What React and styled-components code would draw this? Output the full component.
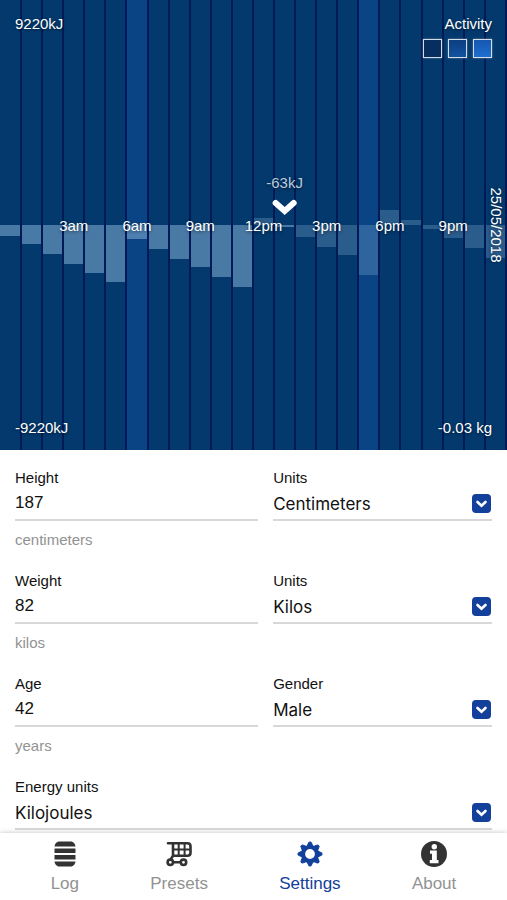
import { useState } from "react";
import styled, { createGlobalStyle } from "styled-components";

// one entry per hour, in px from the axis; negative hangs below it
const hours = [
  -11, -19, -29, -39, -48, -57, -14, -24, -34, -42, -52, -62, 7, -2, -12, -22,
  -30, -50, 15, 5, -4, -13, -23, -33,
];
const currentHour = 13;
const activeHours = [6, 17];
const hourLabels = {
  3: "3am",
  6: "6am",
  9: "9am",
  12: "12pm",
  15: "3pm",
  18: "6pm",
  21: "9pm",
};

const GlobalStyle = createGlobalStyle`
  * {
    box-sizing: border-box;
  }
  body {
    margin: 0;
    background: #fff;
    font-family: "Liberation Sans", Arial, sans-serif;
    font-size: 15px;
    line-height: 18px;
    color: #111;
  }
`;

const Page = styled.div`
  display: flex;
  flex-direction: column;
  height: 100vh;
`;

const Chart = styled.section`
  position: relative;
  flex: 0 0 50%;
  display: flex;
  padding-left: 1px;
  background: #03396c;
  color: #fff;
  text-shadow: 0 1px 3px rgba(0, 0, 0, 0.5);
  overflow: hidden;
`;

const Column = styled.div`
  position: relative;
  flex: 1;
  border-right: 2px solid #001a57;
  background: ${(props) => (props.$active ? "#0a4484" : "transparent")};
`;

const Bar = styled.div`
  position: absolute;
  left: 0;
  right: 0;
  ${(props) => (props.$up ? "bottom: 50%;" : "top: 50%;")}
  background: ${(props) =>
    props.$past ? "rgba(160, 200, 235, 0.45)" : "rgba(160, 200, 235, 0.25)"};

  ${Column}:first-child > & {
    left: -1px;
  }
`;

const HourLabel = styled.span`
  position: absolute;
  z-index: 1;
  top: 50%;
  left: 50%;
  transform: translate(-50%, -50%);
  padding-top: 2px;
  white-space: nowrap;
`;

const Marker = styled.div`
  position: absolute;
  z-index: 1;
  bottom: calc(50% + 8px);
  left: 50%;
  transform: translateX(-50%);
  display: flex;
  flex-direction: column;
  align-items: center;
  gap: 6px;
  color: #b9cbdd;
  white-space: nowrap;
`;

const Corner = styled.div`
  position: absolute;
  z-index: 1;
  ${(props) => (props.$bottom ? "bottom: 13px;" : "top: 15px;")}
  ${(props) => (props.$right ? "right: 15px;" : "left: 15px;")}
`;

const Legend = styled.div`
  display: flex;
  flex-direction: column;
  align-items: flex-end;
  gap: 6px;
`;

const Swatches = styled.div`
  display: flex;
  gap: 6px;
`;

const Swatch = styled.button`
  width: 19px;
  height: 19px;
  padding: 0;
  border: 1px solid #d3dde8;
  box-shadow: 0 0 2px rgba(255, 255, 255, 0.4);
  background: ${(props) => props.$fill};
  cursor: pointer;
`;

const DateLabel = styled.div`
  position: absolute;
  z-index: 1;
  top: 50%;
  right: 2px;
  transform: translateY(-50%);
  writing-mode: vertical-rl;
`;

const Form = styled.form`
  flex: 1;
  min-height: 0;
  overflow-y: auto;
  scrollbar-width: none;
  padding: 19px 15px 0;
  display: flex;
  flex-direction: column;
  gap: 23px;
`;

const Row = styled.div`
  display: grid;
  grid-template-columns: ${(props) => (props.$full ? "1fr" : "10fr 9fr")};
  column-gap: 15px;
`;

const Field = styled.div`
  display: flex;
  flex-direction: column;
  min-width: 0;
`;

const Control = styled.div`
  display: grid;
  align-items: center;
  height: 34px;
  border-bottom: 2px solid #d8d8d8;

  & > * {
    grid-area: 1 / 1;
  }
`;

const controlText = `
  width: 100%;
  height: 32px;
  margin: 0;
  padding: 0;
  border: 0;
  outline: 0;
  background: none;
  color: #111;
  font-size: 17px;
`;

const Input = styled.input`
  ${controlText}
  font-family: "Liberation Sans", Arial, sans-serif;
`;

const Select = styled.select`
  ${controlText}
  appearance: none;
  padding-top: 2px;
  font-family: Inter, "Liberation Sans", sans-serif;
  cursor: pointer;
`;

const SelectArrow = styled.svg`
  justify-self: end;
  margin-right: 1px;
  pointer-events: none;
`;

const Hint = styled.small`
  padding-top: 10px;
  font-size: 15px;
  color: #929292;
`;

const Tabs = styled.nav`
  z-index: 2;
  flex: none;
  display: flex;
  justify-content: space-around;
  padding: 8px 15px 5px;
  background: #fff;
  box-shadow: 0 0 5px rgba(0, 0, 0, 0.25);
`;

const Tab = styled.a`
  display: flex;
  flex-direction: column;
  align-items: center;
  gap: 6px;
  font-size: 17px;
  line-height: 22px;
  text-decoration: none;
  color: ${(props) => (props.$active ? "#12409a" : "#929292")};

  svg {
    color: ${(props) => (props.$active ? "#12409a" : "#333")};
  }
`;

const LogIcon = () => (
  <svg width="26" height="26" viewBox="0 0 26 26" fill="currentColor">
    <path d="M6.500 0.500h13q3.500 1 4 5H2.500q.5-4 4-5z" />
    <rect x="2.500" y="7.500" width="21" height="4.500" rx="0.500" />
    <rect x="2.500" y="14" width="21" height="4.500" rx="0.500" />
    <path d="M2.500 20.500h21q-.5 4-4 5h-13q-3.500-1-4-5z" />
  </svg>
);

const CartIcon = () => (
  <svg
    width="26"
    height="26"
    viewBox="0 0 26 26"
    fill="none"
    stroke="currentColor"
    strokeWidth="2.600"
    strokeLinecap="round"
    strokeLinejoin="round"
  >
    <path d="M2 2.200h19.500q3 0 3 3v6.500q0 3-3 3H7.500M7 2.500v12.200l-2.500 4" />
    <path d="M12.700 3v11.500M18.600 3v11.500M8 8.600h16" strokeWidth="2" />
    <circle cx="4.300" cy="21.300" r="2.700" />
    <circle cx="17.500" cy="21.300" r="2.700" />
    <path d="M7.500 21.300h7" />
  </svg>
);

const GearIcon = () => (
  <svg width="26" height="26" viewBox="0 0 26 26" stroke="currentColor">
    <circle cx="13" cy="13" r="7" fill="none" strokeWidth="4.200" />
    {[0, 45, 90, 135, 180, 225, 270, 315].map((angle) => (
      <path
        key={angle}
        d="M10.200 5l1.600-3.700q1.200-.8 2.400 0L15.800 5z"
        transform={`rotate(${angle} 13 13)`}
        fill="currentColor"
        strokeLinejoin="round"
      />
    ))}
  </svg>
);

const InfoIcon = () => (
  <svg width="26" height="26" viewBox="0 0 26 26">
    <circle cx="13" cy="13" r="13" fill="currentColor" />
    <circle cx="13.300" cy="5.800" r="2.700" fill="#fff" />
    <path d="M9 9.500h6.800v9.500H17.500v3.200H8.800V19h2.200v-6.300H9z" fill="#fff" />
  </svg>
);

const tabs = [
  { name: "Log", icon: <LogIcon /> },
  { name: "Presets", icon: <CartIcon /> },
  { name: "Settings", icon: <GearIcon /> },
  { name: "About", icon: <InfoIcon /> },
];

const EnergyChart = () => (
  <Chart>
    {hours.map((value, hour) => (
      <Column key={hour} $active={activeHours.includes(hour)}>
        <Bar
          $up={value > 0}
          $past={hour < 12 || hour === currentHour}
          style={{ height: Math.abs(value) }}
        />
        {hourLabels[hour] ? <HourLabel>{hourLabels[hour]}</HourLabel> : null}
        {hour === currentHour ? (
          <Marker>
            -63kJ
            <svg width="26" height="19" viewBox="0 0 26 19" fill="none">
              <path
                d="M4 5l9 8 9-8"
                stroke="#fff"
                strokeWidth="6"
                strokeLinecap="round"
              />
            </svg>
          </Marker>
        ) : null}
      </Column>
    ))}
    <Corner>9220kJ</Corner>
    <Corner $bottom>-9220kJ</Corner>
    <Corner $right>
      <Legend>
        Activity
        <Swatches>
          <Swatch type="button" aria-label="Low" $fill="#062f60" />
          <Swatch
            type="button"
            aria-label="Medium"
            $fill="linear-gradient(#0b3f80, #1452a0)"
          />
          <Swatch
            type="button"
            aria-label="High"
            $fill="linear-gradient(#1657b0, #1f6fd0)"
          />
        </Swatches>
      </Legend>
    </Corner>
    <Corner $bottom $right>
      -0.03 kg
    </Corner>
    <DateLabel>25/05/2018</DateLabel>
  </Chart>
);

const NumberField = ({ id, label, initial, hint }) => {
  const [value, setValue] = useState(initial);
  return (
    <Field>
      <label htmlFor={id}>{label}</label>
      <Control>
        <Input
          id={id}
          inputMode="numeric"
          value={value}
          onChange={(e) => setValue(e.target.value)}
        />
      </Control>
      <Hint>{hint}</Hint>
    </Field>
  );
};

const SelectField = ({ id, label, options }) => (
  <Field>
    <label htmlFor={id}>{label}</label>
    <Control>
      <Select id={id}>
        {options.map((option) => (
          <option key={option}>{option}</option>
        ))}
      </Select>
      <SelectArrow width="19" height="19" viewBox="0 0 19 19" fill="none">
        <rect width="19" height="19" rx="4" fill="#12409a" />
        <path
          d="M5.500 8l4 3.800 4-3.800"
          stroke="#fff"
          strokeWidth="2.600"
          strokeLinecap="round"
        />
      </SelectArrow>
    </Control>
  </Field>
);

const App = () => (
  <Page>
    <GlobalStyle />
    <EnergyChart />
    <Form>
      <Row>
        <NumberField
          id="height"
          label="Height"
          initial="187"
          hint="centimeters"
        />
        <SelectField
          id="heightUnits"
          label="Units"
          options={["Centimeters", "Inches"]}
        />
      </Row>
      <Row>
        <NumberField id="weight" label="Weight" initial="82" hint="kilos" />
        <SelectField
          id="weightUnits"
          label="Units"
          options={["Kilos", "Pounds"]}
        />
      </Row>
      <Row>
        <NumberField id="age" label="Age" initial="42" hint="years" />
        <SelectField id="gender" label="Gender" options={["Male", "Female"]} />
      </Row>
      <Row $full>
        <SelectField
          id="energyUnits"
          label="Energy units"
          options={["Kilojoules", "Calories"]}
        />
      </Row>
    </Form>
    <Tabs>
      {tabs.map(({ name, icon }) => (
        <Tab
          key={name}
          href={`#${name.toLowerCase()}`}
          $active={name === "Settings"}
        >
          {icon}
          {name}
        </Tab>
      ))}
    </Tabs>
  </Page>
);

export default App;
